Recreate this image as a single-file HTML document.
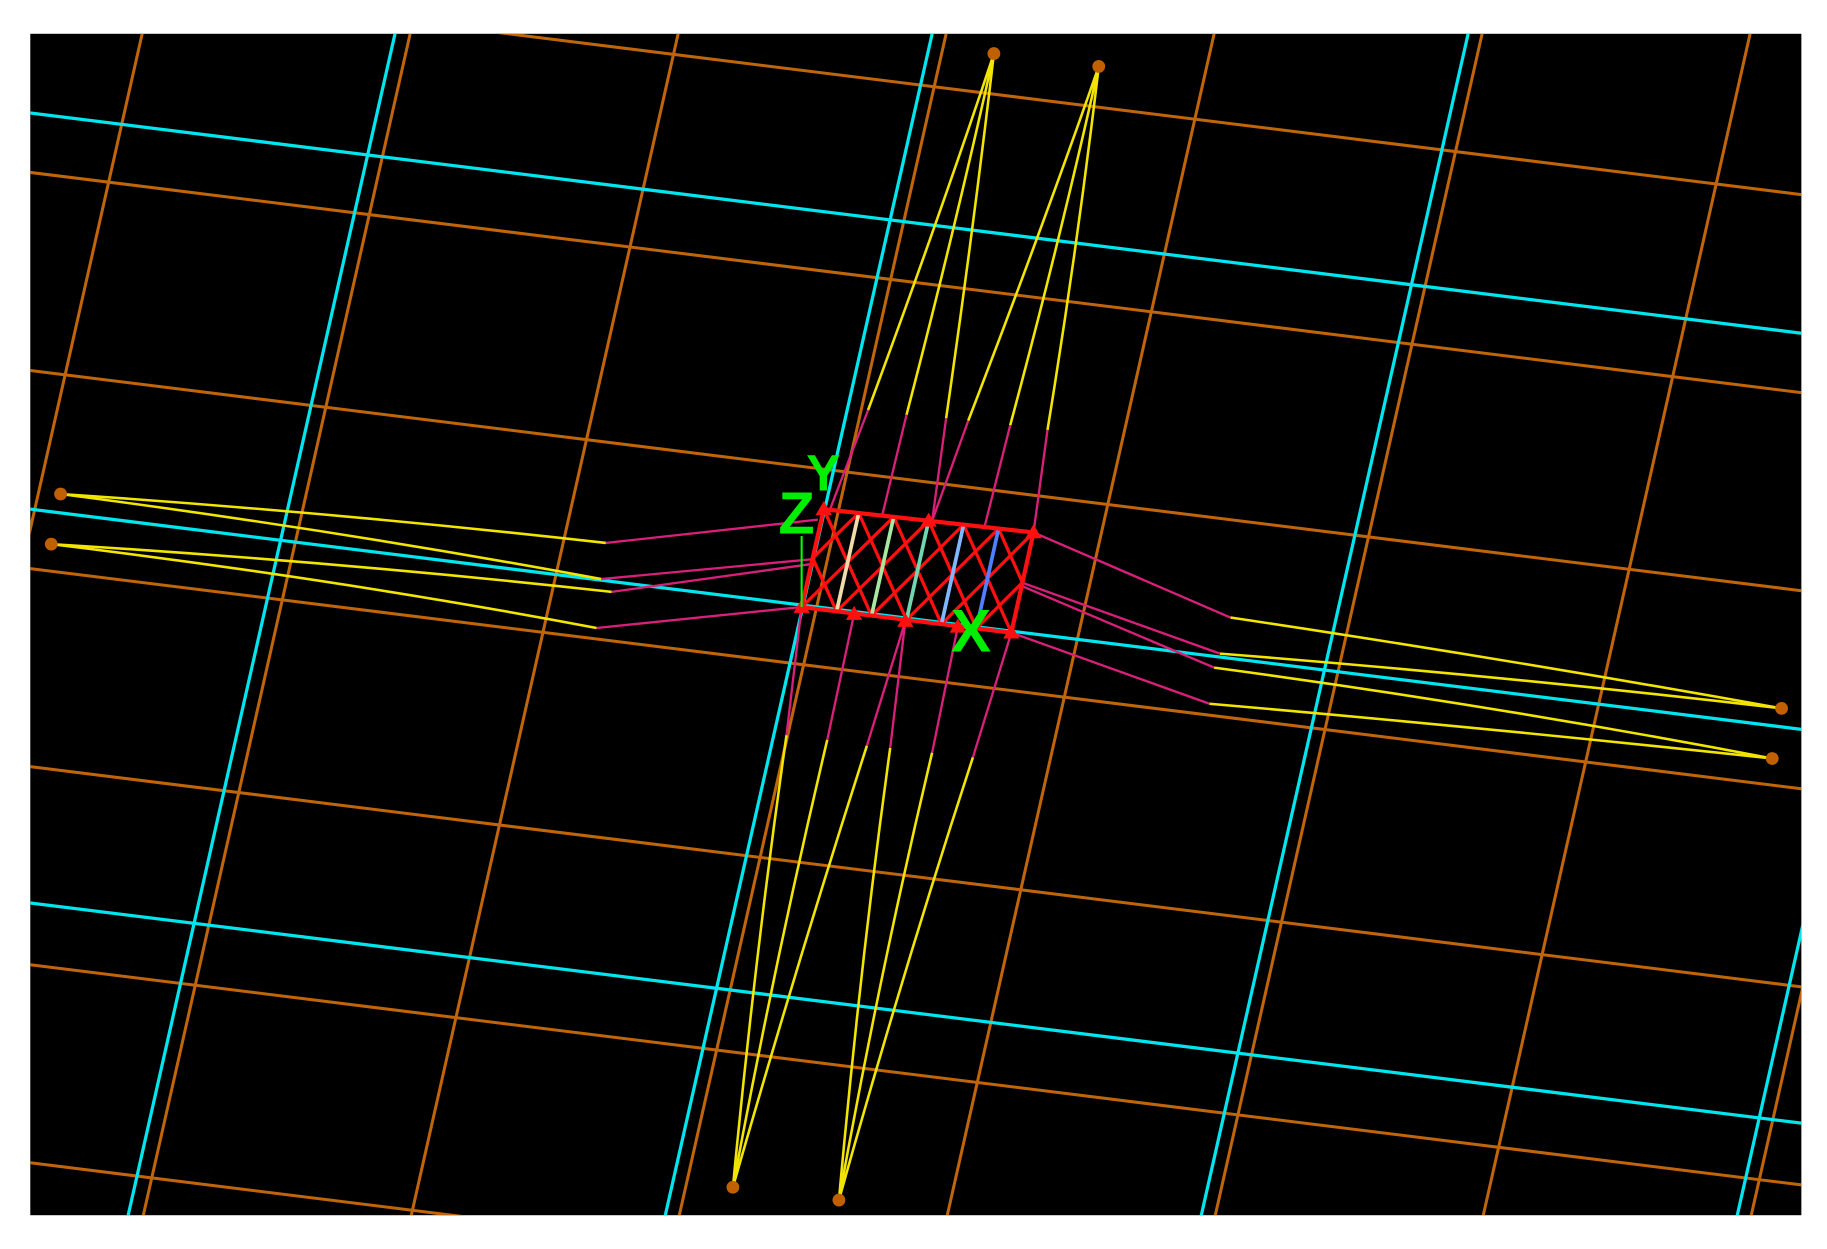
<!DOCTYPE html>
<html><head><meta charset="utf-8"><style>
html,body{margin:0;padding:0;background:#fff;width:1827px;height:1249px;overflow:hidden}
svg{display:block;position:absolute;left:0;top:0}
</style></head><body>
<svg width="1827" height="1249" viewBox="0 0 1568 1072" preserveAspectRatio="none" xmlns="http://www.w3.org/2000/svg">
<defs><clipPath id="c"><rect x="26" y="29" width="1520" height="1014"/></clipPath></defs>
<rect x="0" y="0" width="1568" height="1072" fill="#fff"/>
<rect x="26" y="29" width="1520" height="1014" fill="#000"/>
<g clip-path="url(#c)" fill="none">
<g stroke="#c0650a" stroke-width="2.6">
<line x1="26" y1="-22" x2="1546" y2="167"/>
<line x1="26" y1="148" x2="1546" y2="337"/>
<line x1="26" y1="318" x2="1546" y2="507"/>
<line x1="26" y1="488" x2="1546" y2="677"/>
<line x1="26" y1="658" x2="1546" y2="847"/>
<line x1="26" y1="828" x2="1546" y2="1017"/>
<line x1="26" y1="998" x2="1546" y2="1187"/>
<line x1="122" y1="29" x2="-107" y2="1043"/>
<line x1="352" y1="29" x2="123" y2="1043"/>
<line x1="582" y1="29" x2="353" y2="1043"/>
<line x1="812" y1="29" x2="583" y2="1043"/>
<line x1="1042" y1="29" x2="813" y2="1043"/>
<line x1="1272" y1="29" x2="1043" y2="1043"/>
<line x1="1502" y1="29" x2="1273" y2="1043"/>
<line x1="1732" y1="29" x2="1503" y2="1043"/>
</g>
<g stroke="#00e5ee" stroke-width="2.8">
<line x1="26" y1="97" x2="1546" y2="286"/>
<line x1="26" y1="437" x2="1546" y2="626"/>
<line x1="26" y1="775" x2="1546" y2="964"/>
<line x1="339" y1="29" x2="110" y2="1043"/>
<line x1="800" y1="29" x2="571" y2="1043"/>
<line x1="1260" y1="29" x2="1031" y2="1043"/>
<line x1="1720" y1="29" x2="1491" y2="1043"/>
</g>
<g stroke="#f2e600" stroke-width="2.2">
<path d="M853,46 Q805,190 745,352"/>
<path d="M853,46 Q820,195 778,356"/>
<path d="M853,46 Q835,200 812,359"/>
<path d="M943,57 Q893,200 831,361"/>
<path d="M943,57 Q910,205 867,365"/>
<path d="M943,57 Q925,210 899,369"/>
<path d="M629,1019 Q648,820 675,631"/>
<path d="M629,1019 Q665,825 710,635"/>
<path d="M629,1019 Q683,830 744,640"/>
<path d="M720,1030 Q738,830 764,642"/>
<path d="M720,1030 Q755,835 800,646"/>
<path d="M720,1030 Q773,840 835,650"/>
<path d="M52,424 Q290,440 520,466"/>
<path d="M52,424 Q290,455 516,497"/>
<path d="M44,467 Q290,482 525,508"/>
<path d="M44,467 Q290,497 512,539"/>
<path d="M1529,608 Q1290,565 1056,530"/>
<path d="M1529,608 Q1290,580 1047,561"/>
<path d="M1521,651 Q1280,605 1042,573"/>
<path d="M1521,651 Q1280,625 1038,604"/>
</g>
<g stroke="#d8207a" stroke-width="2">
<polyline points="745,352 712,438"/>
<polyline points="778,356 757,443"/>
<polyline points="812,359 800,447"/>
<polyline points="831,361 800,447"/>
<polyline points="867,365 845,452"/>
<polyline points="899,369 887,457"/>
<polyline points="675,631 688,521"/>
<polyline points="710,635 733,527"/>
<polyline points="744,640 777,533"/>
<polyline points="764,642 777,533"/>
<polyline points="800,646 822,538"/>
<polyline points="835,650 868,543"/>
<polyline points="520,466 702,446"/>
<polyline points="516,497 697,480"/>
<polyline points="525,508 697,484"/>
<polyline points="512,539 688,521"/>
<polyline points="1056,530 887,457"/>
<polyline points="1047,561 877,500"/>
<polyline points="1042,573 877,503"/>
<polyline points="1038,604 868,543"/>
</g>
<g stroke="#ff1010" stroke-width="2.8">
<polyline points="707,437 727.5,482.5 688,521"/>
<polyline points="737,440.3 697.5,479 718,524.7"/>
<polyline points="737,440.3 757.5,486 718,524.7"/>
<polyline points="767,443.7 727.5,482.5 748,528.3"/>
<polyline points="767,443.7 787.5,489.5 748,528.3"/>
<polyline points="797,447 757.5,486 778,532"/>
<polyline points="797,447 817.5,493 778,532"/>
<polyline points="827,450.3 787.5,489.5 808,535.7"/>
<polyline points="827,450.3 847.5,496.5 808,535.7"/>
<polyline points="857,453.7 817.5,493 838,539.3"/>
<polyline points="857,453.7 877.5,500 838,539.3"/>
<polyline points="887,457 847.5,496.5 868,543"/>
</g>
<g stroke-width="3.2">
<line x1="737" y1="440.3" x2="718" y2="524.7" stroke="#f0dca8"/>
<line x1="767" y1="443.7" x2="748" y2="528.3" stroke="#a8e8a0"/>
<line x1="797" y1="447" x2="778" y2="532" stroke="#70d8b0"/>
<line x1="827" y1="450.3" x2="808" y2="535.7" stroke="#80b8ff"/>
<line x1="857" y1="453.7" x2="838" y2="539.3" stroke="#5080ff"/>
<line x1="887" y1="457" x2="868" y2="543" stroke="#ff7090"/>
</g>
<polygon points="707,437 887,457 868,543 688,521" stroke="#ff1010" stroke-width="3.6" fill="none"/>
<g fill="#ff1010">
<polygon points="688,514 681,526 695,526"/>
<polygon points="733,520 726,532 740,532"/>
<polygon points="777,526 770,538 784,538"/>
<polygon points="822,531 815,543 829,543"/>
<polygon points="868,536 861,548 875,548"/>
<polygon points="707,430 700,442 714,442"/>
<polygon points="887,450 880,462 894,462"/>
<polygon points="797,440 790,452 804,452"/>
</g>
<line x1="688" y1="460" x2="688" y2="521" stroke="#00ff00" stroke-width="1.8"/>
<g fill="#c06000">
<circle cx="853" cy="46" r="5.5"/><circle cx="943" cy="57" r="5.5"/>
<circle cx="629" cy="1019" r="5.5"/><circle cx="720" cy="1030" r="5.5"/>
<circle cx="52" cy="424" r="5.5"/><circle cx="44" cy="467" r="5.5"/>
<circle cx="1529" cy="608" r="5.5"/><circle cx="1521" cy="651" r="5.5"/>
</g>
<g fill="#00ee00" font-family="Liberation Sans, sans-serif" font-weight="bold">
<text x="692" y="421" font-size="44">Y</text>
<text x="668" y="458" font-size="51">Z</text>
<text x="816" y="559" font-size="52">X</text>
</g>
</g>
</svg>
</body></html>
